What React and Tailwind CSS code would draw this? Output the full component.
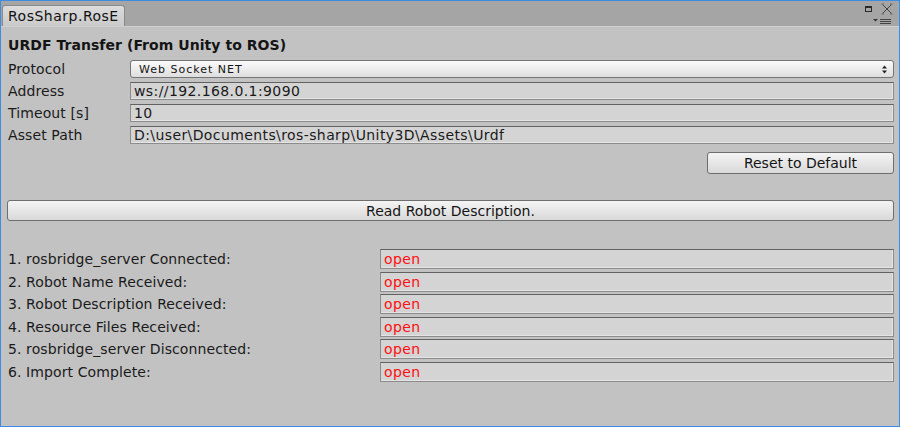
import React from "react";

const font = { fontFamily: '"DejaVu Sans", Verdana, sans-serif' };

function Field({ children, red }) {
  return (
    <div
      className={`flex-1 h-full flex items-center pl-[3px] border border-[#8c8c8c] border-t-[#626262] bg-[#d4d4d4] shadow-[inset_0_-1px_0_#e4e4e4,inset_-1px_0_0_#e4e4e4] text-[14px] tracking-[0.4px] leading-none ${
        red ? "text-[#ff1010]" : "text-[#1a1a1a]"
      }`}
    >
      {children}
    </div>
  );
}

function Btn({ children, className = "" }) {
  return (
    <div
      className={`flex items-center justify-center rounded-[3px] border border-[#6e6e6e] bg-gradient-to-b from-[#f4f4f4] to-[#d9d9d9] text-[14px] leading-none text-[#141414] ${className}`}
    >
      {children}
    </div>
  );
}

function Row({ label, children }) {
  return (
    <div className="flex items-center h-[18px]">
      <div className="w-[124px] pl-[2px] text-[14px] tracking-[0.1px] leading-none text-[#1a1a1a]">{label}</div>
      {children}
    </div>
  );
}

const statuses = [
  "1. rosbridge_server Connected:",
  "2. Robot Name Received:",
  "3. Robot Description Received:",
  "4. Resource Files Received:",
  "5. rosbridge_server Disconnected:",
  "6. Import Complete:",
];

export default function App() {
  return (
    <div
      className="w-[900px] h-[427px] border border-[#3a8de2] bg-[#c2c2c2] flex flex-col overflow-hidden"
      style={font}
    >
      {/* tab bar */}
      <div className="h-[26px] bg-[#a5a5a5] flex items-end justify-between border-b border-[#cfcfcf] shrink-0">
        <div className="ml-[1px] w-[123px] h-[21px] rounded-t-[3px] border border-b-0 border-[#8a8a8a] bg-gradient-to-b from-[#dcdcdc] to-[#cacaca] flex items-center pl-[5px] text-[14px] tracking-[0.5px] leading-none text-[#111] overflow-hidden whitespace-nowrap">
          RosSharp.RosE
        </div>
        <div className="self-stretch flex flex-col items-end pr-[6px] pt-[2px] gap-[3px]">
          <div className="flex items-center gap-[8px]">
            <svg width="8" height="8" viewBox="0 0 8 8" className="block">
              <rect x="0.5" y="1.5" width="6" height="5" fill="none" stroke="#2a2a2a" strokeWidth="1" />
              <rect x="0" y="1" width="7" height="2" fill="#2a2a2a" />
            </svg>
            <svg width="12" height="12" viewBox="0 0 12 12" className="block">
              <path d="M1.5 1.5 L10.5 10.5 M10.5 1.5 L1.5 10.5" stroke="#444" strokeWidth="1" fill="none" />
              <path d="M0.5 1 H3 M9 1 H11.5 M0.5 11 H3 M9 11 H11.5" stroke="#666" strokeWidth="1" fill="none" />
            </svg>
          </div>
          <svg width="20" height="8" viewBox="0 0 20 8" className="block">
            <path d="M0 1 H5 L2.5 3.5 Z" fill="#333" />
            <path d="M7 1.5 H18 M7 3.5 H18 M7 5.5 H18" stroke="#444" strokeWidth="1" />
          </svg>
        </div>
      </div>

      {/* body */}
      <div className="flex flex-col px-[5px]">
        <div className="mt-[9px] pl-[2px] h-[18px] flex items-center text-[14px] tracking-[0.05px] font-bold leading-none text-[#141414]">
          URDF Transfer (From Unity to ROS)
        </div>

        <div className="mt-[6px] flex flex-col gap-[4px]">
          <Row label="Protocol">
            <div className="flex-1 h-[18px] rounded-[3px] border border-[#747474] bg-gradient-to-b from-[#fbfbfb] to-[#dedede] flex items-center justify-between pl-[8px] pr-[6px] text-[11px] tracking-[1px] leading-none text-[#141414]">
              <span>Web Socket NET</span>
              <svg width="5" height="9" viewBox="0 0 5 9">
                <path d="M0 3.5 L2.5 0.5 L5 3.5 Z M0 5.5 L2.5 8.5 L5 5.5 Z" fill="#222" />
              </svg>
            </div>
          </Row>
          <Row label="Address">
            <Field>ws://192.168.0.1:9090</Field>
          </Row>
          <Row label="Timeout [s]">
            <Field>10</Field>
          </Row>
          <Row label="Asset Path">
            <Field>D:\user\Documents\ros-sharp\Unity3D\Assets\Urdf</Field>
          </Row>
        </div>

        <div className="mt-[8px] flex justify-end">
          <Btn className="w-[187px] h-[22px]">Reset to Default</Btn>
        </div>

        <Btn className="mt-[26px] h-[21px] ml-[1px]">Read Robot Description.</Btn>

        <div className="mt-[28px] flex flex-col gap-[2.6px]">
          {statuses.map((s) => (
            <div key={s} className="flex items-center h-[20px]">
              <div className="w-[374px] pl-[2px] text-[14px] tracking-[0.1px] leading-none text-[#1a1a1a]">{s}</div>
              <Field red>open</Field>
            </div>
          ))}
        </div>
      </div>
    </div>
  );
}
